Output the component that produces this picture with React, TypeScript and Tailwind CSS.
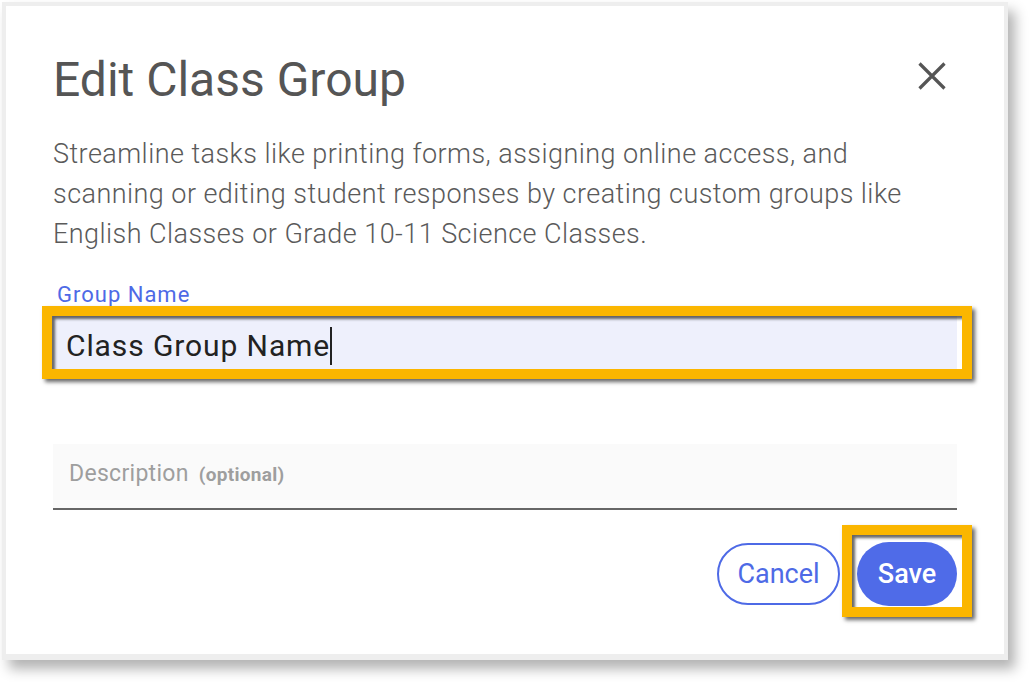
import React from "react";

export default function App() {
  return (
    <div className="w-[1030px] h-[682px] bg-white p-[2px]" style={{ fontFamily: "Roboto, 'Noto Sans', sans-serif" }}>
      <div className="w-[1006px] h-[658px] bg-white border-[#eeeeee] border-t-4 border-l-4 border-r-4 border-b-[6px] shadow-[7px_9px_12px_rgba(0,0,0,0.3)] pl-[47px] pr-[47px] pt-[49px]">
        <div className="flex justify-between items-start">
          <h1 className="text-[48px] leading-[50px] text-[#555555] font-normal">Edit Class Group</h1>
          <svg className="mt-[5px] mr-[9px]" width="32" height="32" viewBox="0 0 32 32" fill="none">
            <path d="M3.5 3.5 L28.5 28.5 M28.5 3.5 L3.5 28.5" stroke="#555555" strokeWidth="3.2" />
          </svg>
        </div>
        <p className="mt-[29px] text-[27px] leading-[40px] tracking-[0.45px] text-[#5a5a5a] font-light">
          Streamline tasks like printing forms, assigning online access, and
          <br />
          scanning or editing student responses by creating custom groups like
          <br />
          English Classes or Grade 10-11 Science Classes.
        </p>
        <div className="mt-[29px] ml-[4px] text-[22px] leading-[24px] tracking-[1px] text-[#4e6ae6]">Group Name</div>
        <div className="relative mt-[9px] h-[53px] bg-[#eef0fc] pl-[13px] pt-[12px] flex items-start">
          <span className="text-[30px] leading-[36px] tracking-[0.9px] text-[#222222]">Class Group Name</span>
          <span className="inline-block w-[2px] h-[38px] mt-[-1px] bg-[#222222]"></span>
          <div className="absolute top-[-10px] bottom-[-10px] left-[-11px] right-[-15px] border-[10px] border-[#fbb600] shadow-[3px_3px_4px_rgba(0,0,0,0.6),inset_3px_3px_3px_rgba(0,0,0,0.6)]"></div>
        </div>
        <div className="mt-[75px] h-[66px] bg-[#fafafa] border-b-2 border-[#666666] pl-[16px] pt-[17px] flex items-baseline">
          <span className="text-[23px] leading-[26px] tracking-[0.3px] text-[#9e9e9e]">Description</span>
          <span className="ml-[10px] text-[19px] leading-[26px] tracking-[0.3px] font-bold text-[#9e9e9e]">(optional)</span>
        </div>
        <div className="mt-[32px] flex justify-end items-center gap-[17px]">
          <button className="w-[123px] h-[62px] rounded-full border-2 border-[#4e6ae6] text-[#4e6ae6] text-[27px] leading-none flex items-center justify-center bg-white">
            Cancel
          </button>
          <div className="relative">
            <button className="w-[100px] h-[64px] rounded-full bg-[#4f6be8] text-white text-[27px] font-medium leading-none flex items-center justify-center">
              Save
            </button>
            <div className="absolute top-[-17px] bottom-[-11px] left-[-15px] right-[-15px] border-[10px] border-[#fbb600] shadow-[3px_3px_4px_rgba(0,0,0,0.6),inset_3px_3px_3px_rgba(0,0,0,0.6)]"></div>
          </div>
        </div>
      </div>
    </div>
  );
}
